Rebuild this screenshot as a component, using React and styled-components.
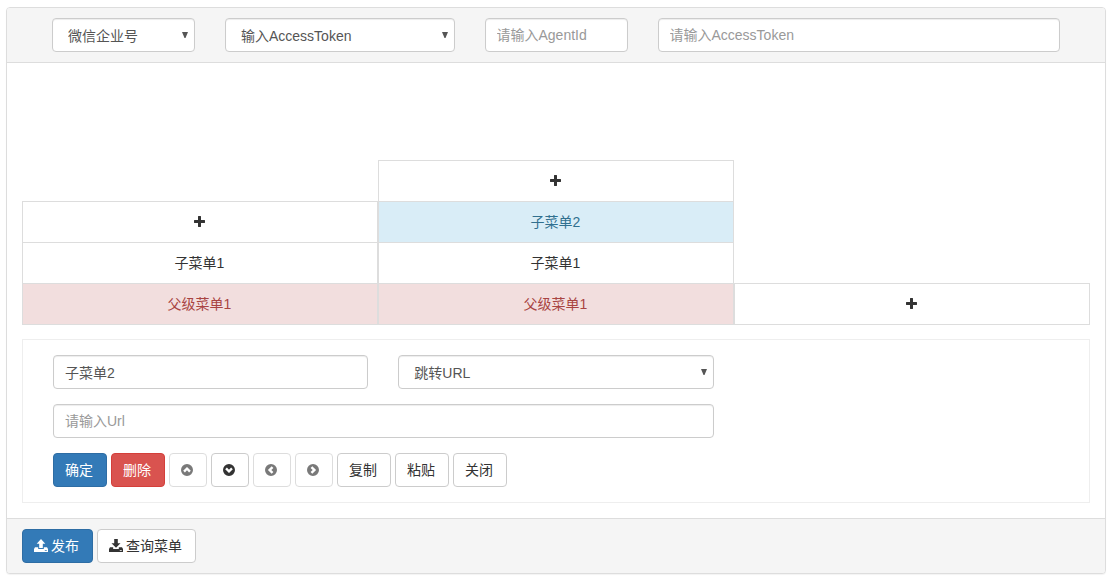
import React, { useState } from 'react';
import styled, { createGlobalStyle, css } from 'styled-components';

const GlobalStyle = createGlobalStyle`
* {
  box-sizing: border-box;
}
body {
  margin: 0;
  padding: 7px 9px 7px 6px;
  background: #fff;
  color: #333;
  font-family: 'Liberation Sans', 'Noto Sans CJK SC', sans-serif;
  font-size: 14px;
  line-height: 20px;
}
button, input, select {
  margin: 0;
  font-family: inherit;
  font-size: 14px;
  line-height: 20px;
}
`

const Panel = styled.main`
  background: #fff;
  border: 1px solid #ddd;
  border-radius: 4px;
  box-shadow: 0 1px 1px rgba(0, 0, 0, .05);
`

const PanelHeading = styled.header`
  display: grid;
  grid-template-columns: 2fr 3fr 2fr 5fr;
  padding: 10px 30px;
  background: #f5f5f5;
  border-bottom: 1px solid #ddd;
  border-radius: 3px 3px 0 0;
`

const PanelBody = styled.section`
  padding: 15px;
`

const PanelFooter = styled.footer`
  display: flex;
  gap: 4px;
  padding: 10px 15px;
  background: #f5f5f5;
  border-top: 1px solid #ddd;
  border-radius: 0 0 3px 3px;
`

const Col = styled.div`
  min-width: 0;
  padding: 0 15px;
  grid-column: span ${({ $span }) => $span || 1};
`

const control = css`
  display: block;
  width: 100%;
  height: 34px;
  background: #fff;
  color: #555;
  border: 1px solid #ccc;
  border-radius: 4px;
  box-shadow: inset 0 1px 1px rgba(0, 0, 0, .075);
  outline: none;
  &:focus {
    border-color: #66afe9;
  }
`

const Input = styled.input`
  ${control}
  padding: 6px 11px;
  &::placeholder {
    color: #999;
    opacity: 1;
  }
`

const SelectBox = styled.div`
  position: relative;
  svg {
    position: absolute;
    top: 14px;
    right: 7px;
    pointer-events: none;
  }
`

const StyledSelect = styled.select`
  ${control}
  appearance: none;
  padding: 7px 20px 5px 15px;
`

const Menu = styled.div`
  display: grid;
  grid-template-columns: repeat(3, 1fr);
  align-items: end;
  min-height: 247px;
`

const MenuColumn = styled.ul`
  list-style: none;
  margin: 0;
  padding: 0;
`

const tones = {
  plain: { background: '#fff', color: '#333' },
  info: { background: '#d9edf7', color: '#31708f' },
  danger: { background: '#f2dede', color: '#a94442' },
}

const MenuItem = styled.button`
  display: flex;
  align-items: center;
  justify-content: center;
  width: 100%;
  height: 42px;
  padding: 0 1px 0 0;
  border: 1px solid #ddd;
  background: ${({ $tone }) => tones[$tone].background};
  color: ${({ $tone }) => tones[$tone].color};
  cursor: pointer;
  li + li > & {
    margin-top: -1px;
  }
`

const Editor = styled.form`
  display: grid;
  grid-template-columns: repeat(3, 1fr);
  row-gap: 15px;
  margin-top: 14px;
  padding: 15px;
  border: 1px solid #eee;
`

const ButtonRow = styled.div`
  display: flex;
  flex-wrap: wrap;
  gap: 4px;
`

const variants = {
  default: { background: '#fff', color: '#333', border: '#ccc' },
  primary: { background: '#337ab7', color: '#fff', border: '#2e6da4' },
  danger: { background: '#d9534f', color: '#fff', border: '#d43f3a' },
}

const Button = styled.button`
  display: inline-flex;
  align-items: center;
  gap: 3px;
  height: 34px;
  padding: 6px 13px 6px 11px;
  border: 1px solid ${({ $variant = 'default' }) => variants[$variant].border};
  border-radius: 4px;
  background: ${({ $variant = 'default' }) => variants[$variant].background};
  color: ${({ $variant = 'default' }) => variants[$variant].color};
  white-space: nowrap;
  cursor: pointer;
  &:disabled {
    opacity: .65;
    cursor: not-allowed;
  }
`

const Icon = ({ size = 12, children }) => (
  <svg width={size} height={size} viewBox={`0 0 ${size} ${size}`} fill="currentColor" aria-hidden="true">
    {children}
  </svg>
)

const PlusIcon = () => (
  <Icon>
    <path d="M4.400 0h2.200q.4 0 .4.4V4h3.600q.4 0 .4.4v2.200q0 .4-.4.4H7v3.600q0 .4-.4.4H4.400q-.4 0-.4-.4V7H.4Q0 7 0 6.600V4.400Q0 4 .4 4H4V.4Q4 0 4.400 0z" />
  </Icon>
)

const ChevronIcon = ({ angle }) => (
  <Icon>
    <path
      fillRule="evenodd"
      transform={`rotate(${angle} 6 6)`}
      d="M6 0a6 6 0 1 1 0 12A6 6 0 0 1 6 0zM6 2.900L2.200 6.700l1.700 1.700L6 6.300l2.100 2.100 1.700-1.700z"
    />
  </Icon>
)

const TransferIcon = ({ down }) => (
  <Icon size={14}>
    <path d={down ? 'M5.200 0h3.600v4.200h2.700L7 8.800 2.500 4.200h2.700z' : 'M7 0l4.300 4.800H8.800v4.100H5.200V4.800H2.700z'} />
    <path fillRule="evenodd" d="M1 8.300h3.200v1.600h5.600V8.300H13l1 1.800V13H0v-2.900zM10.800 11v.8h2V11z" />
  </Icon>
)

const Select = ({ label, options }) => (
  <SelectBox>
    <StyledSelect aria-label={label}>
      {options.map(option => <option key={option}>{option}</option>)}
    </StyledSelect>
    <svg width="6" height="6" viewBox="0 0 6 6" fill="#555" aria-hidden="true">
      <path d="M0 0h6L3.500 6h-1z" />
    </svg>
  </SelectBox>
)

const columns = [
  [{ add: true }, { name: '子菜单1' }, { name: '父级菜单1', parent: true }],
  [{ add: true }, { name: '子菜单2' }, { name: '子菜单1' }, { name: '父级菜单1', parent: true }],
  [{ add: true }],
]

const App = () => {
  const [selected, setSelected] = useState('1-1');
  const [name, setName] = useState('子菜单2');

  const getTone = (item, id) => {
    if (item.parent) return 'danger';
    return id === selected ? 'info' : 'plain';
  }

  const handleSelect = (item, id) => {
    if (item.add) return;
    setSelected(id);
    setName(item.name);
  }

  return (
    <>
      <GlobalStyle />
      <Panel>
        <PanelHeading>
          <Col><Select label="账号类型" options={['微信企业号', '微信公众号']} /></Col>
          <Col><Select label="凭证方式" options={['输入AccessToken']} /></Col>
          <Col><Input aria-label="AgentId" placeholder="请输入AgentId" /></Col>
          <Col><Input aria-label="AccessToken" placeholder="请输入AccessToken" /></Col>
        </PanelHeading>

        <PanelBody>
          <Menu>
            {columns.map((items, col) => (
              <MenuColumn key={col}>
                {items.map((item, row) => {
                  const id = `${col}-${row}`;
                  return (
                    <li key={id}>
                      <MenuItem
                        type="button"
                        $tone={getTone(item, id)}
                        aria-label={item.add ? '添加菜单' : undefined}
                        onClick={() => handleSelect(item, id)}
                      >
                        {item.add ? <PlusIcon /> : item.name}
                      </MenuItem>
                    </li>
                  )
                })}
              </MenuColumn>
            ))}
          </Menu>

          <Editor onSubmit={(e) => e.preventDefault()}>
            <Col>
              <Input aria-label="菜单名称" value={name} onChange={(e) => setName(e.target.value)} />
            </Col>
            <Col><Select label="菜单类型" options={['跳转URL', '点击推事件']} /></Col>
            <Col />
            <Col $span={2}><Input aria-label="Url" placeholder="请输入Url" /></Col>
            <Col $span={3}>
              <ButtonRow>
                <Button $variant="primary">确定</Button>
                <Button type="button" $variant="danger">删除</Button>
                <Button type="button" aria-label="上移" disabled><ChevronIcon angle={0} /></Button>
                <Button type="button" aria-label="下移"><ChevronIcon angle={180} /></Button>
                <Button type="button" aria-label="左移" disabled><ChevronIcon angle={270} /></Button>
                <Button type="button" aria-label="右移" disabled><ChevronIcon angle={90} /></Button>
                <Button type="button">复制</Button>
                <Button type="button">粘贴</Button>
                <Button type="button">关闭</Button>
              </ButtonRow>
            </Col>
          </Editor>
        </PanelBody>

        <PanelFooter>
          <Button type="button" $variant="primary"><TransferIcon />发布</Button>
          <Button type="button"><TransferIcon down />查询菜单</Button>
        </PanelFooter>
      </Panel>
    </>
  )
}

export default App;
